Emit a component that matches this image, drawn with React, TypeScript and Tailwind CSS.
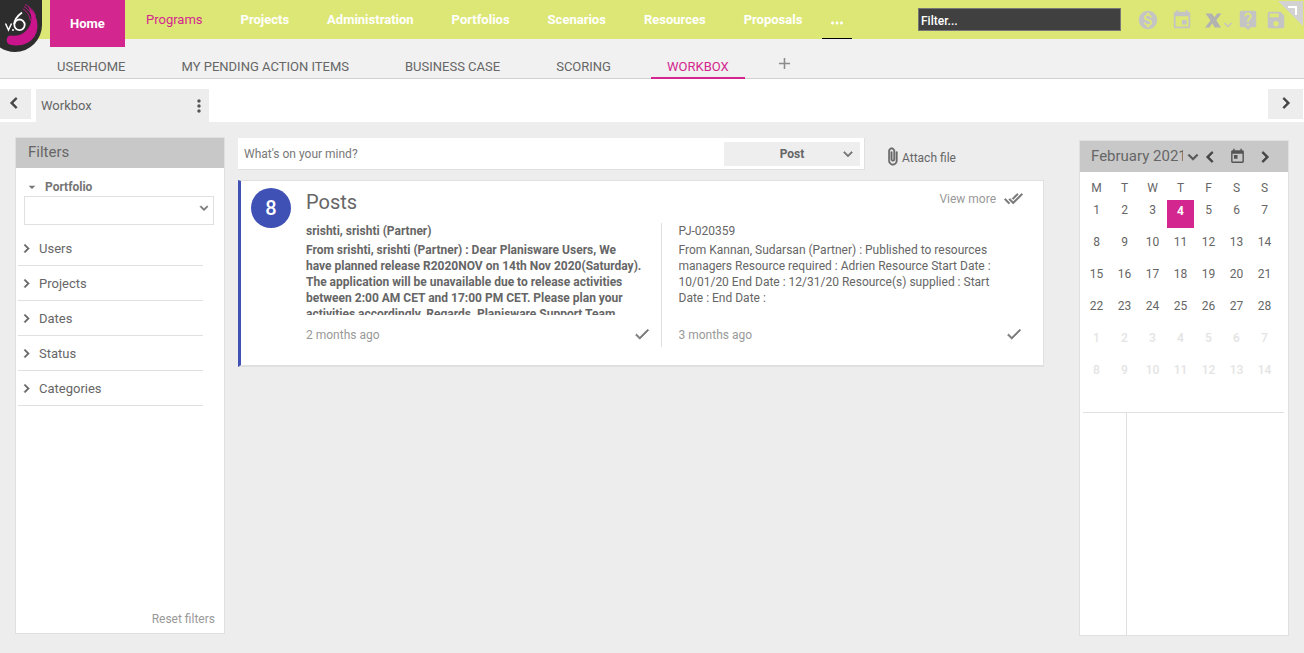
import React from "react";
import {
  MdAdd,
  MdArrowDropDown,
  MdEvent,
  MdLiveHelp,
  MdMonetizationOn,
  MdMoreHoriz,
  MdMoreVert,
  MdSave,
  MdToday,
} from "react-icons/md";

const modules = ["Programs", "Projects", "Administration", "Portfolios", "Scenarios", "Resources", "Proposals"];
const tabs = ["USERHOME", "MY PENDING ACTION ITEMS", "BUSINESS CASE", "SCORING", "WORKBOX"];
const filterGroups = ["Users", "Projects", "Dates", "Status", "Categories"];
const weekdays = ["M", "T", "W", "T", "F", "S", "S"];
const weeks = [
  [1, 2, 3, 4, 5, 6, 7],
  [8, 9, 10, 11, 12, 13, 14],
  [15, 16, 17, 18, 19, 20, 21],
  [22, 23, 24, 25, 26, 27, 28],
  [1, 2, 3, 4, 5, 6, 7],
  [8, 9, 10, 11, 12, 13, 14],
];

const glyphs = {
  right: "M10 6 8.59 7.41 13.17 12l-4.58 4.59L10 18l6-6z",
  left: "M15.41 7.41 14 6l-6 6 6 6 1.41-1.41L10.83 12z",
  down: "M16.59 8.59 12 13.17 7.41 8.59 6 10l6 6 6-6z",
  check: "M9 16.17 4.83 12l-1.42 1.41L9 19 21 7l-1.41-1.41z",
  checkAll:
    "m18 7-1.41-1.41-6.34 6.34 1.41 1.41L18 7zm4.24-1.41L11.66 16.17 7.48 12l-1.41 1.41L11.66 19l12-12-1.42-1.41zM.41 13.41 6 19l1.41-1.41L1.83 12 .41 13.41z",
  clip: "M16.5 6v11.5c0 2.21-1.79 4-4 4s-4-1.79-4-4V5a2.5 2.5 0 0 1 5 0v10.5c0 .55-.45 1-1 1s-1-.45-1-1V6H10v9.5a2.5 2.5 0 0 0 5 0V5c0-2.21-1.79-4-4-4S7 2.79 7 5v12.5c0 3.04 2.46 5.5 5.5 5.5s5.500-2.46 5.500-5.500V6h-1.5z",
};

/** Heavier-weight version of the Material glyphs. */
function Glyph({ name, size, className }: { name: keyof typeof glyphs; size: number; className?: string }) {
  return (
    <svg viewBox="0 0 24 24" width={size} height={size} className={className} aria-hidden="true">
      <path d={glyphs[name]} fill="currentColor" stroke="currentColor" strokeWidth="0.8" />
    </svg>
  );
}

function Logo() {
  return (
    <svg viewBox="0 0 42 52" className="h-[52px] w-[42px] shrink-0" role="img" aria-label="v.6">
      <path d="M0 0H42V25A27 27 0 0 1 15 52A27 27 0 0 1 0 47.5Z" fill="#2d2d2d" />
      <path
        d="M11 35.500C5.500 35.500 5.500 43 9.500 44.500C19 47 29 44.500 34.500 36.500C40 28 38 14.500 28 6.500C32 14 32.500 21 29 27C25 33.500 19 36.500 11 35.500Z"
        fill="#c9148c"
      />
      <path d="M25 4.500C31 7.500 34 11 35.500 16M24 6.500C28.500 9.500 31.500 13 32.500 18M23 9C27 11.500 29.500 15 30.500 21" fill="none" stroke="#c9148c" strokeWidth="0.9" />
      <path d="M5.500 23.500L8.500 30L11.500 23.500" fill="none" stroke="#fff" strokeWidth="1.500" />
      <circle cx="13" cy="30" r="1" fill="#fff" />
      <ellipse cx="19.500" cy="24.800" rx="5.200" ry="5.300" fill="none" stroke="#fff" strokeWidth="1.800" />
      <path d="M22 12.500C18 15.500 14.500 19 14.300 24" fill="none" stroke="#fff" strokeWidth="1.800" />
    </svg>
  );
}

function TopBar() {
  return (
    <header className="relative z-10 flex h-[39px] items-start bg-[#dde776]">
      <Logo />
      <nav className="ml-2 flex items-start text-[13px] font-bold text-white">
        <a href="#home" className="mr-0.5 flex h-[47px] w-[75px] items-center justify-center bg-[#d3278f]">Home</a>
        {modules.map((m, i) => (
          <a
            key={m}
            href={"#" + m}
            className={"flex h-[39px] items-center px-[19px] " + (i === 0 ? "font-normal text-[#d3278f]" : "")}
          >
            {m}
          </a>
        ))}
        <button aria-label="More" className="ml-px flex h-[39px] w-[30px] items-center justify-center border-b border-black pt-2">
          <MdMoreHoriz size={18} />
        </button>
      </nav>
      <div className="ml-auto flex items-center pt-2 pr-[17px] text-[#c4c4c4]">
        <input
          aria-label="Filter"
          placeholder="Filter..."
          className="mr-4 h-[23px] w-[203px] border border-[#777] bg-[#404040] px-0.5 pt-0.5 text-[12px] font-medium text-white outline-none placeholder:text-white"
        />
        <button aria-label="Budget" className="mr-3"><MdMonetizationOn size={22} /></button>
        <button aria-label="Calendar" className="mr-3"><MdEvent size={22} /></button>
        <button aria-label="Export" className="mr-1 flex text-[#b2b2b2]">
          <svg viewBox="0 0 28 22" className="h-[22px] w-7">
            <path d="M0.500 4.500H6.800L9.500 8.300L12 4.500H16.500L11.300 11.200L16 18.500H9.800L7.200 14.300L4.500 18.500H0L5.500 11.500Z" fill="currentColor" />
            <path d="M19.500 14L23 17.500L26.500 14" fill="none" stroke="#c4c4c4" strokeWidth="1.500" />
          </svg>
        </button>
        <button aria-label="Help" className="mr-1.5"><MdLiveHelp size={22} /></button>
        <button aria-label="Save"><MdSave size={22} /></button>
      </div>
      <button aria-label="Expand" className="absolute top-px right-px">
        <svg viewBox="0 0 25 25" className="size-[25px]">
          <path d="M0 0H25V25Z" fill="#d2d2d2" />
          <path d="M10 6H18V14" fill="none" stroke="#fff" strokeWidth="2" />
        </svg>
      </button>
    </header>
  );
}

function TabBar() {
  return (
    <nav className="flex h-10 items-stretch gap-6 border-b border-[#d0d0d0] bg-[#f1f1f1] pl-[41px] text-[13px] text-[#666]">
      {tabs.map((t) => (
        <a
          key={t}
          href={"#" + t}
          className={
            "-mb-px flex items-center border-b-2 px-4 pt-[18px] " +
            (t === "WORKBOX" ? "border-[#d3278f] text-[#d3278f]" : "border-transparent")
          }
        >
          {t}
        </a>
      ))}
      <button aria-label="Add tab" className="ml-1.5 flex items-center pt-2.5 text-[#8c8c8c]">
        <MdAdd size={19} />
      </button>
    </nav>
  );
}

function SheetBar() {
  return (
    <div className="flex h-[43px] items-start bg-white pt-2.5 text-[#444]">
      <button aria-label="Previous" className="flex h-[30px] w-[31px] items-center justify-center bg-[#ededed] pr-1 pb-0.5">
        <Glyph name="left" size={22} />
      </button>
      <div className="ml-[5px] flex h-[33px] w-[173px] items-center justify-between bg-[#ededed] pl-[5px] text-[13px] text-[#666]">
        Workbox
        <button aria-label="Sheet menu" className="text-[#555]"><MdMoreVert size={20} /></button>
      </div>
      <button aria-label="Next" className="mr-px ml-auto flex h-[30px] w-[35px] items-center justify-center bg-[#ededed] pb-0.5">
        <Glyph name="right" size={22} />
      </button>
    </div>
  );
}

function Filters() {
  return (
    <aside className="mb-0.5 flex w-[210px] shrink-0 flex-col border border-[#e0e0e0] bg-white">
      <h2 className="h-[30px] bg-[#c8c8c8] pl-3 text-[15px] leading-7 text-[#666]">Filters</h2>
      <div className="pt-2.5 pr-2.5 pl-2">
        <label htmlFor="portfolio" className="flex h-[18px] items-center gap-[5px] text-[12px] font-bold text-[#757575]">
          <MdArrowDropDown size={16} />
          Portfolio
        </label>
        <div className="relative">
          <select id="portfolio" className="block h-[29px] w-full appearance-none border border-[#e0e0e0] bg-white" />
          <Glyph name="down" size={16} className="pointer-events-none absolute top-1 right-0.5 text-[#777]" />
        </div>
      </div>
      <div className="mt-1.5 mr-[21px] ml-0.5">
        {filterGroups.map((g) => (
          <button key={g} className="flex h-[35px] w-full items-center gap-1 border-b border-[#e0e0e0] text-[13px] text-[#666]">
            <Glyph name="right" size={17} />
            <span className="pt-px">{g}</span>
          </button>
        ))}
      </div>
      <button className="mt-auto mr-[9px] mb-[5px] self-end text-[12px] text-[#999]">Reset filters</button>
    </aside>
  );
}

function Post({ title, body, age, unread }: { title: string; body: string; age: string; unread?: boolean }) {
  return (
    <article className="flex h-[124px] min-w-0 flex-1 flex-col text-[12px] leading-4 text-[#666]">
      <div className={unread ? "pr-2 font-bold" : "pr-2.5"}>
        <h3 className="mb-[3px]">{title}</h3>
        <p className="h-[73px] overflow-hidden">{body}</p>
      </div>
      <div className="mt-2.5 flex items-center justify-between text-[#999]">
        <span className="pt-px">{age}</span>
        <button aria-label="Mark as read" className="text-[#777]"><Glyph name="check" size={18} /></button>
      </div>
    </article>
  );
}

function Feed() {
  return (
    <main className="ml-[13px] min-w-0 flex-1">
      <div className="flex items-start">
        <div className="mt-px flex h-8 w-[627px] items-center border-r border-b border-[#e0e0e0] bg-white">
          <input
            aria-label="What's on your mind?"
            placeholder="What's on your mind?"
            className="min-w-0 flex-1 pl-1.5 text-[12px] outline-none placeholder:text-[#777]"
          />
          <button className="relative mr-1 flex h-6 w-[136px] items-center justify-center bg-[#eee] text-[12px] font-bold text-[#666]">
            Post
            <Glyph name="down" size={18} className="absolute right-[3px] text-[#777]" />
          </button>
        </div>
        <button className="ml-[18px] flex items-center pt-2 text-[12px] text-[#666]">
          <Glyph name="clip" size={19} />
          <span className="pt-1">Attach file</span>
        </button>
      </div>
      <section className="mt-2.5 flex h-[187px] items-start border border-b-2 border-l-[3px] border-[#e0e0e0] border-l-[#3f51b5] bg-white pt-[7px] pr-5 pl-2.5">
        <div className="flex size-10 shrink-0 items-center justify-center rounded-full bg-[#3f51b5] text-[20px] font-medium text-white">8</div>
        <div className="ml-[15px] min-w-0 flex-1">
          <div className="flex h-[35px] items-start justify-between">
            <h2 className="text-[20px] leading-7 text-[#666]">Posts</h2>
            <div className="flex h-[21px] items-center gap-2 text-[12px] text-[#999]">
              <a href="#posts" className="pt-px">View more</a>
              <button aria-label="Mark all as read" className="text-[#777]"><Glyph name="checkAll" size={19} /></button>
            </div>
          </div>
          <div className="flex">
            <Post
              unread
              title="srishti, srishti (Partner)"
              body="From srishti, srishti (Partner) : Dear Planisware Users, We have planned release R2020NOV on 14th Nov 2020(Saturday). The application will be unavailable due to release activities between 2:00 AM CET and 17:00 PM CET. Please plan your activities accordingly. Regards, Planisware Support Team"
              age="2 months ago"
            />
            <div className="mr-[17px] ml-2.5 w-px bg-[#e0e0e0]" />
            <Post
              title="PJ-020359"
              body="From Kannan, Sudarsan (Partner) : Published to resources managers Resource required : Adrien Resource Start Date : 10/01/20 End Date : 12/31/20 Resource(s) supplied : Start Date : End Date :"
              age="3 months ago"
            />
          </div>
        </div>
      </section>
    </main>
  );
}

function Calendar() {
  return (
    <aside className="mt-[3px] ml-[35px] flex w-[210px] shrink-0 flex-col border border-[#e0e0e0] bg-white">
      <div className="flex h-[31px] items-center bg-[#c8c8c8] pl-[11px] text-[#555]">
        <h2 className="w-[92px] overflow-hidden text-[15px] whitespace-nowrap text-[#666]">February 2021</h2>
        <button aria-label="Choose month"><Glyph name="down" size={20} /></button>
        <button aria-label="Previous month" className="-ml-1 text-[#444]"><Glyph name="left" size={22} /></button>
        <button aria-label="Today" className="ml-2"><MdToday size={17} /></button>
        <button aria-label="Next month" className="ml-2 text-[#444]"><Glyph name="right" size={22} /></button>
      </div>
      <table className="mt-[5px] ml-[3px] w-[196px] table-fixed text-center text-[12px] leading-5 text-[#666]">
        <thead>
          <tr className="h-[23px] align-top">
            {weekdays.map((d, i) => (
              <th key={i} className="p-0 pt-px pr-px font-normal">{d}</th>
            ))}
          </tr>
        </thead>
        <tbody>
          {weeks.map((week, w) => (
            <tr key={w} className={"h-8 align-top " + (w > 3 ? "font-medium text-[#e4e4e4]" : "")}>
              {week.map((d) => (
                <td key={d} className="p-0 pr-px">
                  {w === 0 && d === 4 ? <div className="h-7 bg-[#d3278f] pt-px font-bold text-white">4</div> : d}
                </td>
              ))}
            </tr>
          ))}
        </tbody>
      </table>
      <div className="mt-5 mr-1 ml-[3px] flex-1 border-t border-[#e0e0e0]">
        <div className="h-full w-11 border-r border-[#e0e0e0]" />
      </div>
    </aside>
  );
}

export default function App() {
  return (
    <div className="flex min-h-screen flex-col bg-[#ededed] font-['Roboto',sans-serif]">
      <TopBar />
      <TabBar />
      <SheetBar />
      <div className="flex flex-1 items-stretch px-[15px] pt-[15px] pb-[17px]">
        <Filters />
        <Feed />
        <Calendar />
      </div>
    </div>
  );
}
